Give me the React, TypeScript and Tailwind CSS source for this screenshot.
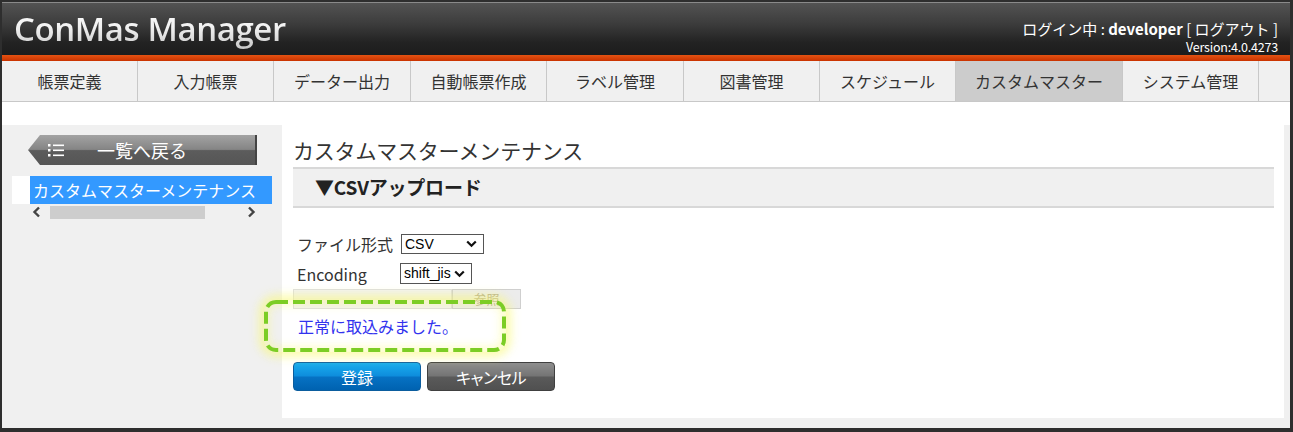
import React from 'react';

const JP = "font-['Noto_Sans_CJK_JP','Noto_Sans',sans-serif]";

const tabs: { label: string; width: string; active?: boolean }[] = [
  { label: '帳票定義', width: 'w-[136px]' },
  { label: '入力帳票', width: 'w-[136px]' },
  { label: 'データー出力', width: 'w-[137px]' },
  { label: '自動帳票作成', width: 'w-[136px]' },
  { label: 'ラベル管理', width: 'w-[137px]' },
  { label: '図書管理', width: 'w-[136px]' },
  { label: 'スケジュール', width: 'w-[136px]' },
  { label: 'カスタムマスター', width: 'w-[167px]', active: true },
  { label: 'システム管理', width: 'w-[136px]' },
];

const ChevronDown: React.FC = () => (
  <svg width="11" height="8" viewBox="0 0 11 8" className="shrink-0">
    <path d="M1.2 1.5 L5.5 5.8 L9.8 1.5" fill="none" stroke="#111" strokeWidth="2.2" />
  </svg>
);

const ListIcon: React.FC = () => (
  <svg width="16" height="14" viewBox="0 0 16 14">
    <rect x="0" y="1" width="2.5" height="2.5" fill="#fff" />
    <rect x="0" y="6" width="2.5" height="2.5" fill="#fff" />
    <rect x="0" y="11" width="2.5" height="2.5" fill="#fff" />
    <rect x="5" y="1.5" width="11" height="1.6" fill="#fff" />
    <rect x="5" y="6.5" width="11" height="1.6" fill="#fff" />
    <rect x="5" y="11.5" width="11" height="1.6" fill="#fff" />
  </svg>
);

const Header: React.FC = () => (
  <div className="h-[53px] flex items-start justify-between border-t border-[#8a8a8a] bg-[linear-gradient(#535353,#3c3c3c_40%,#232323_75%,#1c1c1c)]">
    <div className="pl-[12px] pt-[5px] font-['Open_Sans',sans-serif] font-semibold text-[33px] leading-[42px] tracking-[-0.4px] bg-[linear-gradient(#ffffff,#f2f2f2_50%,#c6c6c6)] bg-clip-text text-transparent">
      ConMas Manager
    </div>
    <div className={`pr-[12px] pt-[16px] text-right text-white ${JP}`}>
      <div className="text-[15px] leading-[19px]">
        ログイン中 : <span className="font-bold">developer</span> [ ログアウト ]
      </div>
      <div className="mt-[2px] text-[12.5px] leading-[13px] tracking-[-0.2px]">Version:4.0.4273</div>
    </div>
  </div>
);

const Nav: React.FC = () => (
  <div className="h-[41px] flex bg-[#f0f0f0] border-b border-[#c8c8c8]">
    {tabs.map(tab => (
      <div
        key={tab.label}
        className={`${tab.width} h-full flex items-center justify-center border-r border-[#c8c8c8] text-[16px] text-[#333] ${JP} ${tab.active ? 'bg-[#cccccc]' : ''}`}
      >
        {tab.label}
      </div>
    ))}
  </div>
);

const Sidebar: React.FC = () => (
  <div className="w-[280px] shrink-0 pt-[10px]">
    <div className="ml-[26px] w-[229px] h-[30px] flex items-center [clip-path:polygon(12px_0,100%_0,100%_100%,12px_100%,0_50%)] bg-[linear-gradient(#a3a3a3,#858585_48%,#5c5c5c_52%,#555)] border-r-2 border-[#444]">
      <div className="ml-[20px]"><ListIcon /></div>
      <span className={`ml-[33px] text-white text-[18px] leading-none ${JP}`}>一覧へ戻る</span>
    </div>
    <div className="mt-[11px] ml-[10px] w-[260px] h-[28px] bg-white pl-[18px]">
      <div className={`h-full bg-[#3399ff] pl-[3px] flex items-center text-white text-[16px] whitespace-nowrap ${JP}`}>
        カスタムマスターメンテナンス
      </div>
    </div>
    <div className="ml-[28px] w-[228px] h-[16px] flex items-center">
      <svg width="10" height="12" viewBox="0 0 10 12" className="ml-[2px]">
        <path d="M7 1.5 L2.5 6 L7 10.5" fill="none" stroke="#444" strokeWidth="2.4" />
      </svg>
      <div className="ml-[8px] w-[155px] h-[13px] bg-[#cdcdcd]" />
      <svg width="10" height="12" viewBox="0 0 10 12" className="ml-auto mr-[2px]">
        <path d="M3 1.5 L7.5 6 L3 10.5" fill="none" stroke="#444" strokeWidth="2.4" />
      </svg>
    </div>
  </div>
);

const SelectBox: React.FC<{ value: string; width: string }> = ({ value, width }) => (
  <div className={`${width} h-full bg-white border border-[#555] flex items-center justify-between pl-[3px] pr-[6px] font-['Liberation_Sans',Arial,sans-serif] text-[14px] text-black`}>
    <span>{value}</span>
    <ChevronDown />
  </div>
);

const MainPanel: React.FC = () => (
  <div className={`w-[1002px] h-[293px] bg-white pl-[11px] pr-[10px] pt-[11px] ${JP}`}>
    <div className="text-[21px] leading-[28px] text-[#333] tracking-[-0.2px]">カスタムマスターメンテナンス</div>
    <div className="mt-[3px] h-[41px] bg-[#f0f0f0] border-y-2 border-[#d8d8d8] flex items-center pl-[22px] text-[19px] font-bold text-[#222] tracking-[-0.2px]">
      ▼CSVアップロード
    </div>
    <div className="mt-[26px] h-[20px] flex items-center pl-[4px] text-[16px] text-[#333]">
      <span className="w-[104px]">ファイル形式</span>
      <SelectBox value="CSV" width="w-[83px]" />
    </div>
    <div className="mt-[9px] h-[21px] flex items-center pl-[4px] text-[16px] text-[#333]">
      <span className="w-[103px]">Encoding</span>
      <SelectBox value="shift_jis" width="w-[72px]" />
    </div>
    <div className="mt-[5px] h-[20px] w-[228px] flex">
      <div className="flex-1 bg-[#f2f2f2] border border-[#dedede]" />
      <div className="w-[69px] bg-[#ececec] border border-[#cfcfcf] flex items-center justify-center text-[13px] text-[#b5ad95]">参照</div>
    </div>
    <div className="mt-[5px] h-[24px] flex items-center pl-[5px] text-[16px] text-[#3333ee]">正常に取込みました。</div>
    <div className="mt-[24px] flex gap-[6px]">
      <button className="w-[128px] h-[29px] rounded-[4px] border border-[#0b5d9e] bg-[linear-gradient(#19adef,#0e8ddc_48%,#0672c4_52%,#0062b0)] text-white text-[16px]">
        登録
      </button>
      <button className="w-[128px] h-[29px] rounded-[4px] border border-[#404040] bg-[linear-gradient(#8e8e8e,#747474_48%,#5a5a5a_52%,#505050)] text-white text-[16px] [font-feature-settings:'palt'] tracking-[-0.5px]">
        キャンセル
      </button>
    </div>
  </div>
);

const Annotation: React.FC = () => (
  <div className="absolute left-[262px] top-[175px] w-[242px] h-[52px] rounded-[12px] shadow-[0_0_10px_5px_rgba(250,250,110,0.55),inset_0_0_10px_5px_rgba(250,250,110,0.4)]">
    <svg width="242" height="52" viewBox="0 0 242 52">
      <rect x="2" y="2" width="238" height="48" rx="10" fill="none" stroke="#7ccd25" strokeWidth="4" strokeDasharray="12 5" />
    </svg>
  </div>
);

export default function App() {
  return (
    <div className="w-[1293px] h-[432px] bg-[#2e2e2e] pl-[2px] pt-[2px] pr-[3px] pb-[4px]">
      <div className="w-full h-full flex flex-col bg-white">
        <Header />
        <div className="h-[6px] bg-[linear-gradient(#e45212,#c93300)]" />
        <Nav />
        <div className="h-[23px] bg-white" />
        <div className="relative flex-1 flex bg-[#f0f0f0]">
          <Sidebar />
          <MainPanel />
          <Annotation />
        </div>
      </div>
    </div>
  );
}
